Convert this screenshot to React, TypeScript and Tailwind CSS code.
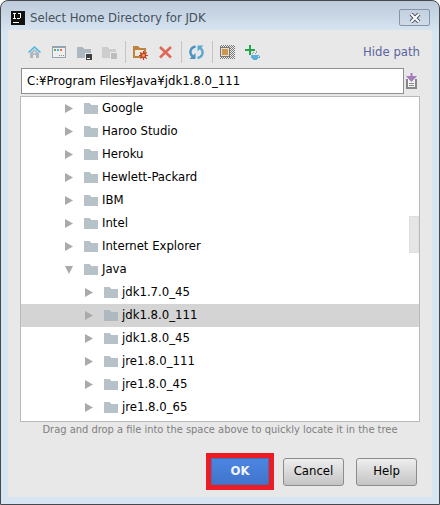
import { useState, type ReactNode } from "react";

type Row = { name: string; level: 0 | 1; open?: boolean };

const rows: Row[] = [
  { name: "Google", level: 0 },
  { name: "Haroo Studio", level: 0 },
  { name: "Heroku", level: 0 },
  { name: "Hewlett-Packard", level: 0 },
  { name: "IBM", level: 0 },
  { name: "Intel", level: 0 },
  { name: "Internet Explorer", level: 0 },
  { name: "Java", level: 0, open: true },
  { name: "jdk1.7.0_45", level: 1 },
  { name: "jdk1.8.0_111", level: 1 },
  { name: "jdk1.8.0_45", level: 1 },
  { name: "jre1.8.0_111", level: 1 },
  { name: "jre1.8.0_45", level: 1 },
  { name: "jre1.8.0_65", level: 1 },
];

function Icon({ children }: { children: ReactNode }) {
  return (
    <svg width="17" height="17" viewBox="0 0 17 17" aria-hidden="true">
      {children}
    </svg>
  );
}

function ToolButton({ label, children }: { label: string; children: ReactNode }) {
  return (
    <button type="button" aria-label={label} className="flex h-6 w-[25px] items-center justify-center pt-[3px]">
      <Icon>{children}</Icon>
    </button>
  );
}

function Separator() {
  return (
    <div className="flex w-1.5 justify-center">
      <div className="h-[22px] w-px bg-[#c4c4c4]" />
    </div>
  );
}

function HomeIcon() {
  return (
    <>
      <path d="M4 8 8.500 4 13 8V13H10V10H7V13H4z" fill="#aeb7bf" />
      <rect x="7.500" y="6.500" width="2" height="2" fill="#e8e8e8" />
      <path d="M2.500 7.500 8.500 2 14.500 7.500" fill="none" stroke="#47b8e0" strokeWidth="1.600" />
    </>
  );
}

function DesktopIcon() {
  return (
    <g shapeRendering="crispEdges">
      <rect x="1" y="1" width="14" height="12" fill="#96a4b0" />
      <rect x="2" y="3" width="12" height="9" fill="#efefef" />
      <rect x="3" y="4" width="2" height="2" fill="#6aa84f" />
      <rect x="6" y="4" width="2" height="2" fill="#3fb4e6" />
      <rect x="9" y="4" width="2" height="2" fill="#f26a3d" />
      <path d="M8 10h1v1H8zM10 10h1v1h-1zM12 10h1v1h-1z" fill="#8a8a8a" />
    </g>
  );
}

function ProjectIcon() {
  return (
    <g shapeRendering="crispEdges">
      <path d="M1 2h5l2 2h7v9H1z" fill="#adb7c0" />
      <rect x="9" y="8" width="8" height="8" fill="#e8e8e8" />
      <rect x="10" y="9" width="6" height="6" fill="#3f3f3f" />
      <rect x="11" y="13" width="3" height="1" fill="#ffffff" />
    </g>
  );
}

function ModuleIcon() {
  return (
    <g shapeRendering="crispEdges">
      <path d="M1 2h5l2 2h7v9H1z" fill="#cdcdcd" />
      <rect x="9" y="7" width="8" height="8" fill="#e8e8e8" />
      <rect x="10" y="8" width="6" height="6" fill="#bdbdbd" />
    </g>
  );
}

function NewFolderIcon() {
  return (
    <>
      <path d="M1 1h5l2 2h6v10H1z" fill="#bd8240" />
      <path d="M3 5h9v3H8v3H3z" fill="#ece7df" />
      <path d="M11.500 6v9M7 10.500h9M8.300 7.300l6.400 6.400M14.700 7.300l-6.400 6.400" stroke="#c63c25" strokeWidth="1.200" />
      <circle cx="11.500" cy="10.500" r="2.500" fill="#c63c25" />
      <circle cx="11.500" cy="10.500" r="1.400" fill="#e5a36d" />
    </>
  );
}

function DeleteIcon() {
  return <path d="M3 2 14 12.500M14 2 3 12.500" stroke="#df6859" strokeWidth="2.600" fill="none" />;
}

function RefreshIcon() {
  return (
    <>
      <path d="M7.500 1.500C2.500 2.500 0.500 7.500 4.500 11.500" fill="none" stroke="#4b93bf" strokeWidth="2.300" />
      <path d="M1.500 14h6V8z" fill="#4b93bf" />
      <path d="M9.500 13C14.500 12 16.500 7 12.500 3" fill="none" stroke="#5aa7d2" strokeWidth="2.300" />
      <path d="M15.500 0.500h-6v6z" fill="#5aa7d2" />
    </>
  );
}

function HiddenIcon() {
  return (
    <g shapeRendering="crispEdges">
      <defs>
        <pattern id="checks" width="2" height="2" patternUnits="userSpaceOnUse">
          <rect width="2" height="2" fill="#eeeeee" />
          <path d="M0 0h1v1H0zM1 1h1v1H1z" fill="#777777" />
        </pattern>
      </defs>
      <rect x="1" y="0" width="15" height="14" fill="url(#checks)" />
      <rect x="1" y="2" width="10" height="10" fill="#777777" />
      <rect x="2" y="3" width="8" height="8" fill="#e9ddce" />
      <rect x="3" y="4" width="6" height="6" fill="#cc9550" />
    </g>
  );
}

function AddJdkIcon() {
  return (
    <g shapeRendering="crispEdges">
      <path d="M5 0h2v4h4v2H7v4H5V6H1V4h4z" fill="#22a546" />
      <path d="M7 10h8v1h1v2h-2v1h-1v1H9v-1H8v-1H7z" fill="#5eb0dc" />
      <path d="M14 11h1v1h-1z" fill="#e8e8e8" />
      <path d="M8 8h1v1H8zM9 7h1v1H9zM11 8h1v1h-1zM12 6h1v2h-1z" fill="#a0a0a0" />
    </g>
  );
}

function FolderIcon() {
  return (
    <svg width="14" height="11" viewBox="0 0 14 11" shapeRendering="crispEdges" aria-hidden="true">
      <path d="M0 0h5l2 2h7v9H0z" fill="#a3afb9" fillOpacity=".78" />
    </svg>
  );
}

function TreeRow({ row, selected, onSelect }: { row: Row; selected: boolean; onSelect: () => void }) {
  return (
    <li
      role="treeitem"
      aria-level={row.level + 1}
      aria-selected={selected}
      aria-expanded={Boolean(row.open)}
      onClick={onSelect}
      className={`flex h-[23px] items-center ${row.level ? "pl-16" : "pl-11"} ${selected ? "bg-[#d4d4d4]" : ""}`}
    >
      <svg width="8" height="9" viewBox="0 0 8 9" className="mr-[11px]" aria-hidden="true">
        <path d={row.open ? "M0 1h8L4 9z" : "M0 0l8 4.500L0 9z"} fill="#aaaaaa" />
      </svg>
      <FolderIcon />
      <span className="ml-1 pb-0.5">{row.name}</span>
    </li>
  );
}

const dialogButton =
  "h-7 w-[61px] rounded-[3px] border border-[#8c8c8c] bg-linear-to-b from-[#eeeeee] to-[#c4c4c4] pb-0.5";

export default function App() {
  const [path, setPath] = useState("C:¥Program Files¥Java¥jdk1.8.0_111");
  const [selected, setSelected] = useState("jdk1.8.0_111");

  return (
    <main className="rounded-t-lg border border-[#47484d] bg-linear-to-b from-[#bccada] to-[#d7e4f1] to-[30px] px-[7px] pb-[7px] font-['DejaVu_Sans_Condensed','DejaVu_Sans',sans-serif] text-[13px] leading-4 text-black">
      <header className="flex h-[29px] items-center pt-1 pl-[3px]">
        <svg width="14" height="14" viewBox="0 0 14 14" aria-hidden="true" shapeRendering="crispEdges">
          <rect width="14" height="14" fill="#111111" />
          <path d="M2 2h3v1H4v4h1v1H2V7h1V3H2zM7 2h3v5H9v1H6V7h3V3H7z" fill="#ffffff" />
          <path d="M2 11h6v1H2z" fill="#ffffff" />
        </svg>
        <h1 className="ml-[5px] flex-1 text-[13px] text-[#46505c]">Select Home Directory for JDK</h1>
        <button
          type="button"
          aria-label="Close"
          className="mr-0.5 flex h-[17px] w-[31px] items-center justify-center rounded-[2px] border border-[#8793ab] bg-linear-to-b from-[#c3d0df] to-[#cfdbe9]"
        >
          <svg width="12" height="10" viewBox="0 0 12 10" aria-hidden="true">
            <path d="M2 1 10 9M10 1 2 9" stroke="#4c5167" strokeWidth="4" />
            <path d="M2 1 10 9M10 1 2 9" stroke="#ffffff" strokeWidth="2" />
          </svg>
        </button>
      </header>

      <div className="bg-[#e8e8e8] px-3 pt-2.5 pb-[7px]">
        <div className="flex h-6 items-center pl-0.5">
          <ToolButton label="Home directory"><HomeIcon /></ToolButton>
          <ToolButton label="Desktop directory"><DesktopIcon /></ToolButton>
          <ToolButton label="Project directory"><ProjectIcon /></ToolButton>
          <ToolButton label="Module directory"><ModuleIcon /></ToolButton>
          <Separator />
          <ToolButton label="New folder"><NewFolderIcon /></ToolButton>
          <ToolButton label="Delete"><DeleteIcon /></ToolButton>
          <Separator />
          <ToolButton label="Refresh"><RefreshIcon /></ToolButton>
          <Separator />
          <ToolButton label="Show hidden files"><HiddenIcon /></ToolButton>
          <ToolButton label="Add JDK"><AddJdkIcon /></ToolButton>
          <a href="#path" className="ml-auto text-[#5b64a0]">Hide path</a>
        </div>

        <div className="mt-1 flex items-center pl-px">
          <input
            id="path"
            aria-label="Path"
            value={path}
            onChange={(e) => setPath(e.target.value)}
            className="h-[26px] min-w-0 flex-1 border border-[#8f8f8f] bg-white px-[5px] pb-0.5 outline-none"
          />
          <button type="button" aria-label="Path history" className="ml-0.5">
            <svg width="14" height="17" viewBox="0 0 14 17" aria-hidden="true">
              <path d="M0 6h2v8h7V6h2v10H0z" fill="#878787" />
              <path d="M2 6h7v8H2z" fill="#f4f4f4" />
              <path d="M3 10.500h5M3 12.500h5" stroke="#8b8b8b" />
              <path d="M4.500 0h2v3H11L5.500 9 0 3h4.500z" fill="#a67cba" />
            </svg>
          </button>
        </div>

        <div className="relative mt-0.5 border border-[#bababa] bg-white pb-0.5">
          <ul role="tree" aria-label="Directories">
            {rows.map((row) => (
              <TreeRow
                key={row.name}
                row={row}
                selected={row.name === selected}
                onSelect={() => setSelected(row.name)}
              />
            ))}
          </ul>
          <div className="absolute top-[119px] right-0 h-[37px] w-2.5 border border-[#dedede] bg-[#e6e6e6]" />
        </div>

        <p className="text-center text-[11px] text-[#808080]">
          Drag and drop a file into the space above to quickly locate it in the tree
        </p>

        <div className="mt-[15px] flex items-center justify-end pr-[3px]">
          <div className="mr-[9px] border-5 border-[#ed1c24]">
            <button
              type="button"
              className="block h-[27px] w-[58px] border border-[#4070b8] bg-linear-to-b from-[#4b86e2] to-[#4274cc] pb-0.5 font-bold text-[#f0f4fa]"
            >
              OK
            </button>
          </div>
          <button type="button" className={`${dialogButton} mr-3`}>Cancel</button>
          <button type="button" className={dialogButton}>Help</button>
        </div>
      </div>
    </main>
  );
}
